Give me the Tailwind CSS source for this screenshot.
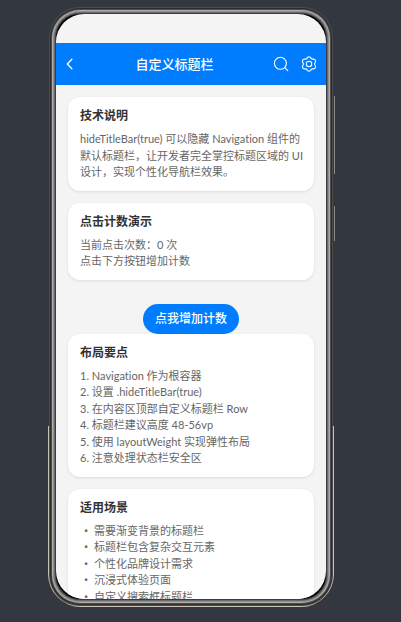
<!DOCTYPE html>
<html lang="zh-CN">
<head>
<meta charset="utf-8">
<meta name="viewport" content="width=device-width, initial-scale=1">
<title>自定义标题栏</title>
<script src="https://cdn.jsdelivr.net/npm/@tailwindcss/browser@4"></script>
</head>
<body class="flex h-screen bg-[#333740] pt-[7px] pr-[68px] pb-4 pl-[49px] font-['Lato','Noto_Sans_CJK_SC',sans-serif] [font-variant-ligatures:none]">
  <div class="relative flex min-w-0 flex-1 p-[7px]">
    <!-- Metal edge, lower half -->
    <div class="absolute -inset-x-px top-[419px] -bottom-px rounded-b-[33px] bg-[#c9c3b6]"></div>
    <!-- Side keys -->
    <div class="absolute top-[89px] -right-[2px] h-[78px] w-px bg-[#8a8a8a]"></div>
    <div class="absolute top-[199px] -right-[2px] h-[35px] w-px bg-[#8a8a8a]"></div>
    <div class="relative flex min-w-0 flex-1 rounded-[24px] bg-black shadow-[0_0_0_1px_#3c3c3e,0_0_0_2px_#6a6a6c,0_0_0_3px_#8e8e8f,0_0_0_4px_#acacac,0_0_0_5px_#4c4c4c,0_0_0_6px_#2c2c2c,0_0_0_7px_#4c4c4c]">
      <main class="flex min-w-0 flex-1 flex-col overflow-hidden rounded-[28px] bg-[#f4f4f4]">
        <div class="h-[29px] shrink-0"></div>
        <header class="flex h-[42px] shrink-0 items-center bg-[#007dff] pr-[9px] pl-2 text-white">
          <button type="button" aria-label="返回" class="size-3">
            <svg viewBox="0 0 12 12" class="size-3" fill="none" stroke="currentColor" stroke-width="1.3" stroke-linecap="round" stroke-linejoin="round"><path d="M7.9 1.2 3.3 6l4.600 4.800"/></svg>
          </button>
          <h1 class="flex-1 text-center text-[13px] leading-5 font-medium">自定义标题栏</h1>
          <button type="button" aria-label="搜索" class="size-4">
            <svg viewBox="0 0 16 16" class="size-4" fill="none" stroke="currentColor" stroke-width="1.1" stroke-linecap="round"><circle cx="7.4" cy="7.3" r="6"/><path d="m11.8 11.7 3 3"/></svg>
          </button>
          <button type="button" aria-label="设置" class="ml-3 size-4">
            <svg viewBox="0 0 16 16" class="size-4" fill="none" stroke="currentColor" stroke-width="1.1" stroke-linejoin="round"><circle cx="8" cy="8" r="2.7"/><path d="M6.5 1.4Q8 .4 9.5 1.4L10.3 2.7Q10.6 3.1 11.2 3.1L12.7 3.1Q14.5 3.7 14.7 5.3L13.9 6.9Q13.4 8 13.9 9.1L14.7 10.7Q14.5 12.3 12.7 12.9L11.2 12.9Q10.6 12.9 10.3 13.3L9.5 14.6Q8 15.6 6.5 14.6L5.7 13.3Q5.4 12.9 4.8 12.9L3.3 12.9Q1.5 12.3 1.3 10.7L2.1 9.1Q2.6 8 2.1 6.9L1.3 5.3Q1.5 3.7 3.3 3.1L4.8 3.1Q5.4 3.1 5.7 2.7Z"/></svg>
          </button>
        </header>
        <div class="flex min-h-0 flex-1 flex-col overflow-hidden p-3 text-[11px] leading-normal text-[#666]">
          <section class="shrink-0 rounded-xl bg-white pt-3 pr-2 pb-[10px] pl-3 shadow-[0_1px_3px_#0000001a]">
            <h2 class="mb-2 text-xs leading-[14px] font-bold text-[#333]">技术说明</h2>
            <p>hideTitleBar(true) 可以隐藏 Navigation 组件的默认标题栏，让开发者完全掌控标题区域的 UI 设计，实现个性化导航栏效果。</p>
          </section>
          <section class="mt-3 shrink-0 rounded-xl bg-white pt-3 pr-2 pb-[10px] pl-3 shadow-[0_1px_3px_#0000001a]">
            <h2 class="mb-2 text-xs leading-[14px] font-bold text-[#333]">点击计数演示</h2>
            <p>当前点击次数：0 次</p>
            <p>点击下方按钮增加计数</p>
          </section>
          <button type="button" class="mt-6 shrink-0 self-center rounded-full bg-[#007dff] px-3 text-xs leading-[30px] font-medium text-white">点我增加计数</button>
          <section class="shrink-0 rounded-xl bg-white pt-3 pr-2 pb-[10px] pl-3 shadow-[0_1px_3px_#0000001a]">
            <h2 class="mb-2 text-xs leading-[14px] font-bold text-[#333]">布局要点</h2>
            <ol>
              <li>1. Navigation 作为根容器</li>
              <li>2. 设置 .hideTitleBar(true)</li>
              <li>3. 在内容区顶部自定义标题栏 Row</li>
              <li>4. 标题栏建议高度 48-56vp</li>
              <li>5. 使用 layoutWeight 实现弹性布局</li>
              <li>6. 注意处理状态栏安全区</li>
            </ol>
          </section>
          <section class="mt-3 shrink-0 rounded-xl bg-white pt-3 pr-2 pb-[10px] pl-3 shadow-[0_1px_3px_#0000001a]">
            <h2 class="mb-2 text-xs leading-[14px] font-bold text-[#333]">适用场景</h2>
            <ul>
              <li class="flex"><span class="w-[14px] pl-1 font-['Noto_Sans']">•</span>需要渐变背景的标题栏</li>
              <li class="flex"><span class="w-[14px] pl-1 font-['Noto_Sans']">•</span>标题栏包含复杂交互元素</li>
              <li class="flex"><span class="w-[14px] pl-1 font-['Noto_Sans']">•</span>个性化品牌设计需求</li>
              <li class="flex"><span class="w-[14px] pl-1 font-['Noto_Sans']">•</span>沉浸式体验页面</li>
              <li class="flex"><span class="w-[14px] pl-1 font-['Noto_Sans']">•</span>自定义搜索框标题栏</li>
            </ul>
          </section>
        </div>
      </main>
    </div>
  </div>
</body>
</html>
